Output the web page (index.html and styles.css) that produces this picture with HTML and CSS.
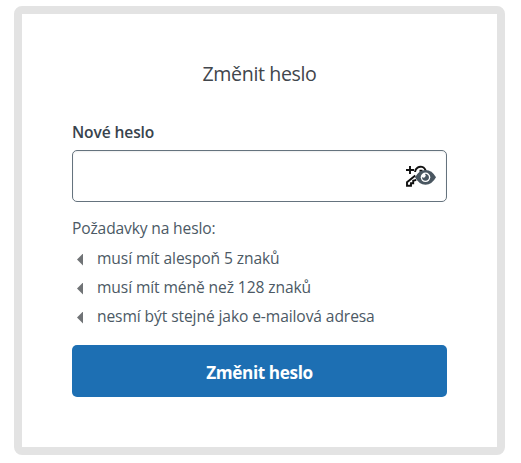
FILE: index.html
```
<!DOCTYPE html>
<html lang="cs">
<head>
<meta charset="utf-8">
<title>Změnit heslo</title>
<link rel="stylesheet" href="styles.css">
</head>
<body>
<main class="card">
  <h1 class="title">Změnit heslo</h1>
  <form class="form">
    <label class="label" for="password">Nové heslo</label>
    <div class="field">
      <input class="input" id="password" type="password">
      <svg class="icons" viewBox="0 0 34 24" width="34" height="24" aria-hidden="true">
        <g fill="none" stroke="#111" stroke-width="1.9">
          <path d="M6 2v8M2 6h8"/>
          <path d="M11 8C11.5 3.8 15 2.2 18 2.9Q21.5 4 21.8 8M15.5 6.7h3M11.3 11.5L3 18.3V21.7h4v-2.5h2.2v-2.4l3-1"/>
        </g>
        <path fill="#495660" d="M11 13.3Q15 5.9 21.5 5.9T32 13.3Q28 20.7 21.5 20.7T11 13.3Z"/>
        <circle cx="21.5" cy="13.3" r="4.8" fill="#fff"/>
        <path fill="#495660" d="M21 9.9a3.5 3.5 0 1 1-3 3.1a2 2 0 0 0 3-3.1Z"/>
      </svg>
    </div>
    <p class="intro">Požadavky na heslo:</p>
    <ul class="rules">
      <li class="rule"><i class="arrow"></i><span>musí mít alespoň 5 znaků</span></li>
      <li class="rule"><i class="arrow"></i><span>musí mít méně než 128 znaků</span></li>
      <li class="rule"><i class="arrow"></i><span>nesmí být stejné jako e-mailová adresa</span></li>
    </ul>
    <button class="button" type="button">Změnit heslo</button>
  </form>
</main>
</body>
</html>
```
FILE: styles.css
```
* { box-sizing: border-box; }
body { margin: 0; background: #fff; font-family: "Open Sans", "Noto Sans", sans-serif; }
.card {
  width: 491px; height: 449px; margin: 6px 0 0 14px; padding: 46px 50px 0;
  border: 8px solid #e3e3e3; border-radius: 8px; background: #fff;
}
.title { margin: 0; text-align: center; font-size: 19.6px; line-height: 28px; font-weight: 400; letter-spacing: -.38px; color: #41464c; }
.form { display: flex; flex-direction: column; margin-top: 34px; }
.label { font-size: 15.6px; line-height: 20px; font-weight: 600; letter-spacing: -.12px; color: #38434d; }
.field { position: relative; margin-top: 8px; height: 52px; }
.input { width: 100%; height: 52px; border: 1px solid #65737e; border-radius: 5px; padding: 0 50px 0 16px; font-size: 16px; outline: 0; background: #fff; box-shadow: inset 0 1px 2px #00000012; }
.icons { position: absolute; left: 332px; top: 14px; }
.intro { margin: 15px 0 0; font-size: 15.6px; line-height: 22px; letter-spacing: -.15px; color: #4c5965; }
.rules { list-style: none; margin: 5px 0 0; padding: 0; }
.rule { display: flex; align-items: center; height: 29px; padding-left: 5px; font-size: 15.6px; letter-spacing: -.1px; color: #4c5965; }
.rule span { margin-top: -2px; }
.arrow { width: 6px; height: 12px; margin: 2px 14px 0 0; background: #707376; clip-path: polygon(100% 0, 100% 100%, 0 50%); }
.button { margin-top: 14px; height: 52px; padding: 2px 0 0; border: 0; border-radius: 5px; background: #1d6fb3; color: #fff; font: 700 17.2px "Open Sans", sans-serif; letter-spacing: -.4px; }
```
